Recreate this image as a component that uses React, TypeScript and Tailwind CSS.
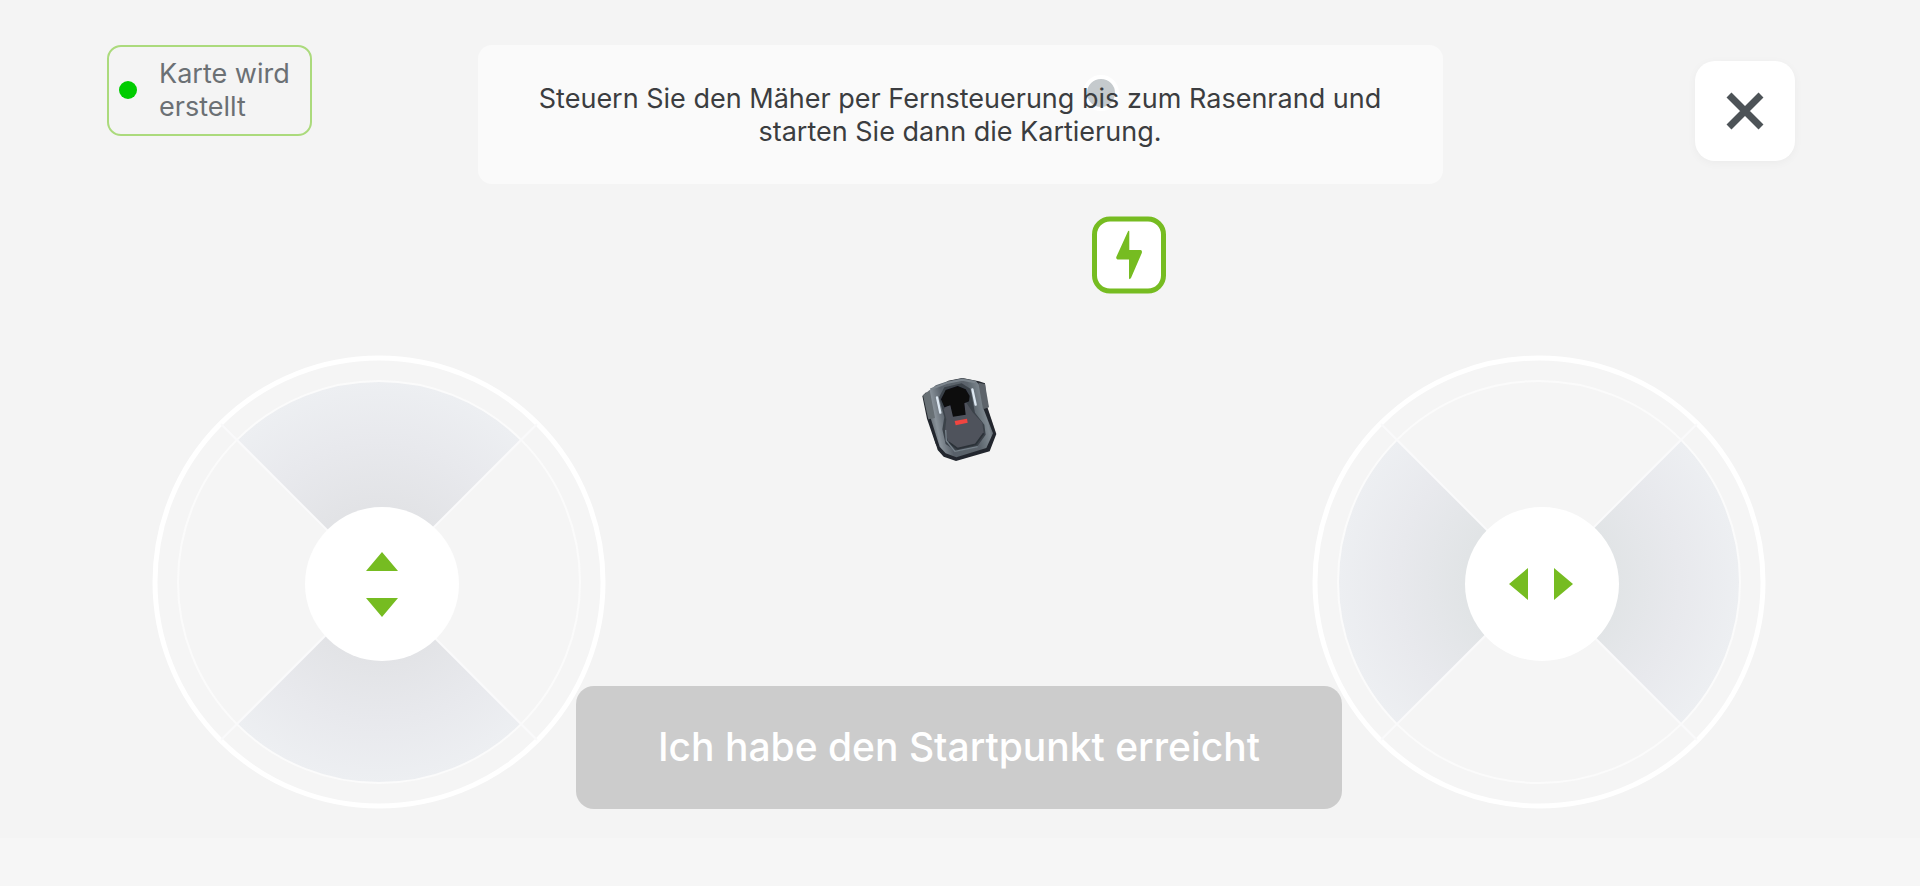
import React from 'react';

interface ControlPadProps {
  direction: 'vertical' | 'horizontal';
  label: string;
}

// Round joystick, two of its four sectors are shaded to show the drive axis
function ControlPad({ direction, label }: ControlPadProps) {
  const vertical = direction === 'vertical';
  const gradientId = `pad-${direction}`;

  return (
    <button type="button" aria-label={label} className="shrink-0 rounded-full">
      <svg className="block w-[454px] h-[454px]" viewBox="0 0 454 454" fill="none">
        <defs>
          <radialGradient id={gradientId} gradientUnits="userSpaceOnUse" cx="227" cy="227" r="201">
            <stop offset="0.38" stopColor={vertical ? '#e2e3e6' : '#e1e4e6'} />
            <stop offset="0.7" stopColor="#e8e9ed" />
            <stop offset="1" stopColor="#edeff2" />
          </radialGradient>
        </defs>
        <circle cx="227" cy="227" r="224" fill="#f5f5f5" stroke="#ffffff" strokeWidth="5" />
        <g transform={vertical ? undefined : 'rotate(90 227 227)'}>
          <path d="M227 227L85 85A201 201 0 0 1 369 85Z" fill={`url(#${gradientId})`} />
          <path d="M227 227L85 369A201 201 0 0 0 369 369Z" fill={`url(#${gradientId})`} />
        </g>
        <circle cx="227" cy="227" r="201" stroke="#fbfbfb" strokeWidth="2" />
        <path d="M69 69L385 385M385 69L69 385" stroke="#fafafb" strokeWidth="2" />
        <circle cx="230" cy="229" r="77" fill="#ffffff" />
        {vertical ? (
          <path d="M230 197L246 216H214ZM230 262L246 243H214Z" fill="#76bc21" />
        ) : (
          <path d="M197 229L216 213V245ZM261 229L242 213V245Z" fill="#76bc21" />
        )}
      </svg>
    </button>
  );
}

function Mower() {
  return (
    <svg className="h-[100px] w-[90px]" viewBox="0 -3 270 300" fill="none">
      <defs>
        <linearGradient id="mower-shell" x1="35" y1="160" x2="235" y2="120" gradientUnits="userSpaceOnUse">
          <stop offset="0" stopColor="#4f565d" />
          <stop offset="0.14" stopColor="#89929a" />
          <stop offset="0.3" stopColor="#59616a" />
          <stop offset="0.7" stopColor="#5b646c" />
          <stop offset="0.88" stopColor="#7f8991" />
          <stop offset="1" stopColor="#3f464e" />
        </linearGradient>
        <filter id="mower-soft" x="-10%" y="-10%" width="120%" height="120%">
          <feGaussianBlur stdDeviation="2" />
        </filter>
      </defs>
      <g filter="url(#mower-soft)">
        {/* wheels and underbody */}
        <path d="M22 78L34 66L50 140L60 180L78 250L62 222L36 146Z" fill="#24282e" />
        <path d="M192 34L210 40L216 108L244 192L224 244L123 273L86 260L68 240L38 140L60 60L100 32L142 24L184 32Z" fill="#23272d" />
        {/* shell */}
        <path d="M42 62L62 46L98 34L142 25L182 32L196 48L206 118L234 190L214 234L124 262L92 250L74 230L46 142Z" fill="url(#mower-shell)" />
        <path d="M24 76L44 60L60 144L40 148Z" fill="#686f75" />
        <path d="M190 38L210 42L222 112L204 118Z" fill="#5d646a" />
        <path d="M46 58L98 38L142 29L180 37" stroke="#7c858d" strokeWidth="6" />
        {/* inner rim and deck */}
        <path d="M72 82L88 52L140 40L166 56L180 128L208 164L212 194L186 230L124 244L92 222L82 178L88 142Z" fill="#3b424a" />
        <path d="M86 118L104 100L150 92L174 128L202 158L206 190L182 223L128 236L100 216L90 182L94 148Z" fill="#50535c" />
        <path d="M100 216L128 236L182 223L206 190" stroke="#2b3037" strokeWidth="5" />
        <path d="M92 180L94 212L120 244L188 230" stroke="#77828b" strokeWidth="4" />
        {/* blade opening */}
        <path d="M78 88L92 60L128 48L152 58L164 78L162 94L148 100L152 134L114 140L106 106L88 112Z" fill="#090a10" />
        <path d="M119 153L156 146L158 158L122 166Z" fill="#f04540" />
        <path d="M66 82L76 128M172 58L182 104" stroke="#dde8f2" strokeWidth="7" strokeLinecap="round" />
      </g>
    </svg>
  );
}

function ChargingStation() {
  return (
    <div className="flex h-[77px] w-[74px] items-center justify-center rounded-[18px] border-[5px] border-[#76bc21] bg-white">
      <svg className="h-[49px] w-[26px]" viewBox="0 0 26 49" fill="#76bc21">
        <path d="M11.900 1Q13.300 -1 13.300 1.500V19.500H24.500Q26.500 19.800 25.800 22.500L15 47.500Q13 50 13 47V29H1.500Q-.2 28.500 .3 26.500Z" />
      </svg>
    </div>
  );
}

export default function App() {
  return (
    <div className="flex min-h-screen flex-col bg-[#f6f6f6] font-[Inter,sans-serif]">
      <main className="relative flex flex-1 flex-col justify-between bg-[#f4f4f4] pb-[29px]">
        {/* Map canvas */}
        <div className="absolute inset-0">
          <div className="absolute left-1/2 top-1/2 -translate-x-1/2 -translate-y-1/2">
            <Mower />
          </div>
          <div className="absolute left-[58.8%] top-[30.4%] -translate-x-1/2 -translate-y-1/2">
            <ChargingStation />
          </div>
        </div>

        <header className="relative grid grid-cols-[1fr_auto_1fr] items-start px-[107px] pt-[45px]">
          <div className="flex w-[205px] items-center gap-[22px] rounded-[14px] border-2 border-[#abda7c] pb-[11px] pl-[10px] pt-[10px] text-[27px] leading-[33px] text-[#6b7074]">
            <span className="h-[18px] w-[18px] shrink-0 rounded-full bg-[#00cc00]"></span>
            <span>Karte wird erstellt</span>
          </div>

          <div className="relative w-[965px] rounded-[14px] bg-[#fafafa] px-12 pb-[36px] pt-[37px]">
            <span className="absolute left-[64.6%] top-[30px] h-[36px] w-[36px] -translate-x-1/2 rounded-full border-4 border-white bg-[#c5cacd]"></span>
            <p className="relative text-center text-[27px] leading-[33px] text-[#3b3d40]">
              Steuern Sie den Mäher per Fernsteuerung bis zum Rasenrand und starten Sie dann die Kartierung.
            </p>
          </div>

          <button
            type="button"
            aria-label="Schließen"
            className="mr-[18px] mt-4 flex h-[100px] w-[100px] items-center justify-center justify-self-end rounded-[20px] bg-white shadow-[0_2px_10px_rgba(0,0,0,0.04)]"
          >
            <svg className="h-[38px] w-[38px]" viewBox="0 0 38 38" fill="none" stroke="#4d5357" strokeWidth="7">
              <path d="M3 3L35 35M35 3L3 35" />
            </svg>
          </button>
        </header>

        <section className="relative flex items-end pl-[152px] pr-[154px]">
          <ControlPad direction="vertical" label="Vorwärts und rückwärts" />
          <button
            type="button"
            className="relative z-10 -mx-[30px] h-[123px] flex-1 rounded-[18px] bg-[#cccccc] text-[39px] font-medium text-white"
          >
            Ich habe den Startpunkt erreicht
          </button>
          <ControlPad direction="horizontal" label="Links und rechts" />
        </section>
      </main>
      <footer className="h-12"></footer>
    </div>
  );
}
